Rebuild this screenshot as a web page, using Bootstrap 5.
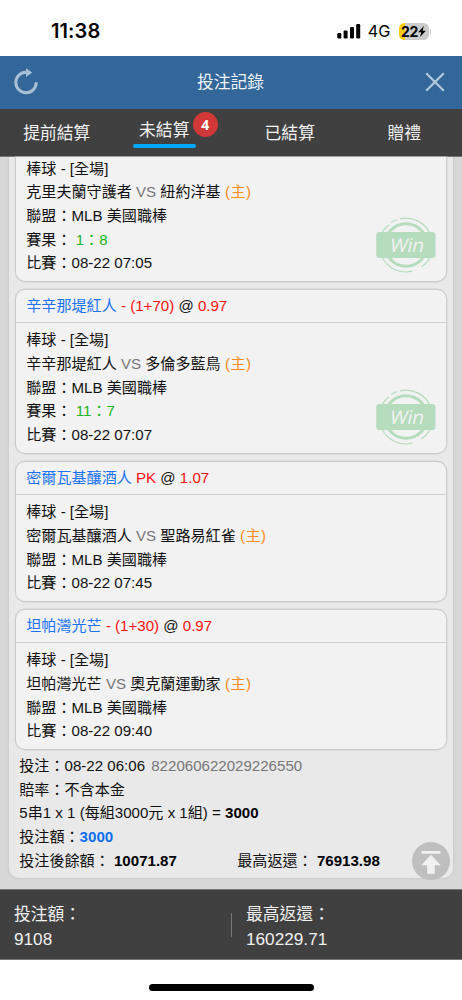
<!DOCTYPE html>
<html lang="zh-Hant">
<head>
<meta charset="utf-8">
<meta name="viewport" content="width=device-width, initial-scale=1">
<title>投注記錄</title>
<link href="https://cdn.jsdelivr.net/npm/bootstrap@5.3.0/dist/css/bootstrap.min.css" rel="stylesheet">
<style>
  body { font-family: "Liberation Sans", "Noto Sans CJK TC", sans-serif; font-size: 15.08px; line-height: 23.72px; color: #111; background: #fff; height: 1000px; overflow: hidden; }
  .status-bar { height: 56px; padding: 6px 31px 0 51px; font-family: Inter, sans-serif; color: #000; }
  .clock { font-size: 20px; font-weight: 600; letter-spacing: .1px; padding-top: 1px; }
  .carrier { font-size: 16.3px; margin: 0 8px 0 7px; padding-top: 1px; }
  .battery { width: 30px; height: 17px; border-radius: 5.5px; background: linear-gradient(90deg, #fc0 6.5px, #ccc 6.5px); font-size: 14px; font-weight: 700; line-height: 17px; letter-spacing: -.3px; }
  .battery-tip { width: 1.5px; height: 5px; margin-left: 1px; border-radius: 0 2px 2px 0; background: #ccc; }
  .title-bar { height: 53px; background: #369; color: #eef3f8; font-size: 16.8px; padding: 0 17px 0 14px; }
  .title-bar svg { margin-bottom: 2px; }
  .title-bar div { padding-right: 3px; }
  .tab-bar { height: 47.5px; background: #404040; color: #f2f2f2; font-size: 16.8px; border-bottom: 1px solid #777; }
  .tab-bar > .col { padding: 4px 1px 0 0; }
  .tab-now { width: 63px; margin-right: -3px; padding-top: 0; }
  .tab-now i { display: block; height: 4px; margin-top: 1px; border-radius: 2px; background: #0af; }
  .count { width: 25px; height: 25px; margin: -18px 0 0; background: #d33838; font-size: 14px; font-weight: 700; color: #fff; font-family: "Open Sans", sans-serif; }
  .tab-bar > .tab-now-wrap { padding: 3px 1px 0 4px; }
  .scroll-area { height: 732.5px; background: #d7d7d7; padding: 0 9px; }
  .slip { height: 721.5px; background: #e9e9e9; border-radius: 0 0 10px 10px; padding: 0 6.5px 0 6.3px; box-shadow: 0 0 3px rgba(0,0,0,.1); }
  .leg { background: #f2f2f2; border: 1px solid #ccc; border-radius: 10px; margin-bottom: 7px; box-shadow: 0 0 0 .4px #d2d2d2; }
  .leg-title { height: 33px; line-height: 32px; padding: 0 10px; border-bottom: 1.4px solid #d2d2d2; }
  .leg-info { padding: 5.4px 10px 5.8px; }
  .leg-cut { border-top: 0; border-radius: 0 0 10px 10px; }
  .leg-cut .leg-info { padding-top: 0; }
  .team { color: #1a73f5; } .odds { color: #f11; } .versus { color: #777; } .host { color: #ff8c1a; letter-spacing: .5px; } .score { color: #20b520; }
  .stamp { right: 9.5px; bottom: 8px; }
  .stamp-word { font: 500 19px "Open Sans", "Noto Sans", sans-serif; fill: #f2f2f2; }
  .summary { padding: 0 4px; margin-top: -2.9px; }
  .summary b { color: #000; } .summary .stake { color: #0d6ff2; }
  .serial { margin-left: 2px; }
  .half { width: 218px; }
  .to-top { right: 12px; bottom: 9px; }
  .total-bar { height: 71px; background: #404040; color: #f0f0f0; font-size: 16.8px; line-height: 24px; border-top: 1px solid #777; border-bottom: 1px solid #777; }
  .total-bar > div { padding: 5px 0 0 14px; }
  .total-bar span { font-size: 17.2px; }
  .total-bar hr { width: 1px; height: 24px; margin: 0; border: 0; background: #777; opacity: 1; }
  .home-line { width: 165px; height: 6.5px; margin-top: 24px; border-radius: 4px; background: #000; }
</style>
</head>
<body>
<svg class="d-none">
  <symbol id="win" viewBox="0 0 60 56">
    <g fill="none" stroke="#b5dcbd">
      <circle cx="30" cy="28" r="21.2" stroke-width="3"/>
      <g stroke-width="1.2">
        <path d="M24 1.9A26.5 26.5 0 0 1 54 16.5"/><path d="M15.3 5.5A27 27 0 0 1 21.3 2.5"/><path d="M6.5 15A27 27 0 0 1 13 7.8"/>
        <path d="M6 40A27 27 0 0 0 36.5 54.2"/><path d="M54.5 39A27 27 0 0 1 45.5 50"/>
      </g>
    </g>
    <rect x=".3" y="15" width="59.2" height="26" rx="3" fill="#b5dcbd"/>
    <text class="stamp-word" text-anchor="middle" transform="translate(30 34.7) skewX(-12)">Win</text>
  </symbol>
</svg>

<div class="status-bar d-flex align-items-center">
  <div class="clock me-auto">11:38</div>
  <svg width="24" height="16" viewBox="0 0 24 16"><rect x=".3" y="10" width="4" height="5.5" rx="1.2"/><rect x="6.6" y="7.4" width="4" height="8.1" rx="1.2"/><rect x="13" y="4" width="4" height="11.5" rx="1.2"/><rect x="19.2" y="1" width="4" height="14.5" rx="1.2"/></svg>
  <div class="carrier">4G</div>
  <div class="battery d-flex align-items-center justify-content-center">22<svg width="8" height="11" viewBox="0 0 8 11"><path d="M5.8 0 .2 6.2h3.1L2 11l5.8-6.3H4.7z"/></svg></div>
  <div class="battery-tip"></div>
</div>

<header class="title-bar d-flex align-items-center justify-content-between">
  <svg width="25" height="28" viewBox="0 0 25 28"><path d="M22.2 14.3A10.2 10.2 0 1 1 12 4.3h2.5" fill="none" stroke="#a9bfd6" stroke-width="3"/><path d="M12 .2 18.3 4.6 12 9z" fill="#a9bfd6"/></svg>
  <div>投注記錄</div>
  <svg width="20" height="20" viewBox="0 0 20 20"><path d="M1.2 1.2 18.8 18.8M18.8 1.2 1.2 18.8" stroke="#b4c8dc" stroke-width="2.2"/></svg>
</header>

<nav class="tab-bar row g-0 text-center">
  <div class="col d-flex align-items-center justify-content-center">提前結算</div>
  <div class="col d-flex align-items-center justify-content-center tab-now-wrap">
    <div class="tab-now">未結算<i></i></div>
    <span class="count rounded-circle d-flex align-items-center justify-content-center">4</span>
  </div>
  <div class="col d-flex align-items-center justify-content-center">已結算</div>
  <div class="col d-flex align-items-center justify-content-center">贈禮</div>
</nav>

<main class="scroll-area position-relative">
  <div class="slip">
    <section class="leg leg-cut position-relative">
      <div class="leg-info">
        <div>棒球 - [全場]</div>
        <div>克里夫蘭守護者 <span class="versus">VS</span> 紐約洋基 <span class="host">(主)</span></div>
        <div>聯盟：MLB 美國職棒</div>
        <div>賽果： <span class="score">1：8</span></div>
        <div>比賽：08-22 07:05</div>
      </div>
      <svg class="stamp position-absolute" width="60" height="56"><use href="#win"/></svg>
    </section>
    <section class="leg position-relative">
      <div class="leg-title"><span class="team">辛辛那堤紅人</span> <span class="odds">- (1+70)</span> @ <span class="odds">0.97</span></div>
      <div class="leg-info">
        <div>棒球 - [全場]</div>
        <div>辛辛那堤紅人 <span class="versus">VS</span> 多倫多藍鳥 <span class="host">(主)</span></div>
        <div>聯盟：MLB 美國職棒</div>
        <div>賽果： <span class="score">11：7</span></div>
        <div>比賽：08-22 07:07</div>
      </div>
      <svg class="stamp position-absolute" width="60" height="56"><use href="#win"/></svg>
    </section>
    <section class="leg">
      <div class="leg-title"><span class="team">密爾瓦基釀酒人</span> <span class="odds">PK</span> @ <span class="odds">1.07</span></div>
      <div class="leg-info">
        <div>棒球 - [全場]</div>
        <div>密爾瓦基釀酒人 <span class="versus">VS</span> 聖路易紅雀 <span class="host">(主)</span></div>
        <div>聯盟：MLB 美國職棒</div>
        <div>比賽：08-22 07:45</div>
      </div>
    </section>
    <section class="leg">
      <div class="leg-title"><span class="team">坦帕灣光芒</span> <span class="odds">- (1+30)</span> @ <span class="odds">0.97</span></div>
      <div class="leg-info">
        <div>棒球 - [全場]</div>
        <div>坦帕灣光芒 <span class="versus">VS</span> 奧克蘭運動家 <span class="host">(主)</span></div>
        <div>聯盟：MLB 美國職棒</div>
        <div>比賽：08-22 09:40</div>
      </div>
    </section>
    <div class="summary">
      <div>投注：08-22 06:06 <span class="versus serial">822060622029226550</span></div>
      <div>賠率：不含本金</div>
      <div>5串1 x 1 (每組3000元 x 1組) = <b>3000</b></div>
      <div>投注額：<b class="stake">3000</b></div>
      <div class="d-flex"><div class="half">投注後餘額： <b>10071.87</b></div><div>最高返還： <b>76913.98</b></div></div>
    </div>
  </div>
  <svg class="to-top position-absolute" width="38" height="38" viewBox="0 0 38 38"><circle cx="19" cy="19" r="19" fill="#bfbfbf"/><path d="M9.5 9h19v2.8h-19zM19 12.8l9.8 10.5h-6v8.5h-7.6v-8.5h-6z" fill="#f1f1f1"/></svg>
</main>

<footer class="total-bar d-flex align-items-center">
  <div class="w-50">投注額：<br><span>9108</span></div>
  <hr>
  <div>最高返還：<br><span>160229.71</span></div>
</footer>
<div class="home-line mx-auto"></div>
<script src="https://cdn.jsdelivr.net/npm/bootstrap@5.3.0/dist/js/bootstrap.bundle.min.js"></script>
</body>
</html>
